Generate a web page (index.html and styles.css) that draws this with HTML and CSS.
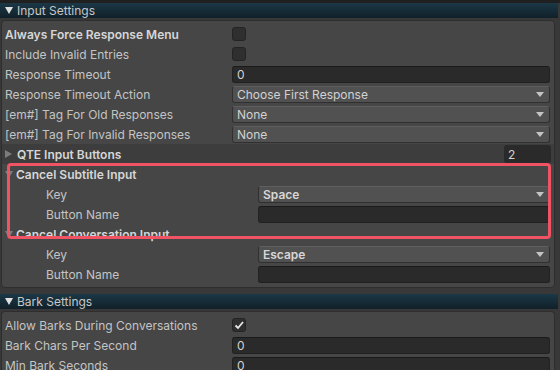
FILE: index.html
```html
<!DOCTYPE html>
<html>
<head>
<meta charset="utf-8">
<link rel="stylesheet" href="styles.css">
</head>
<body>
<div class="top-strip"></div>
<div class="section-header">
  <svg class="hdr-fold" width="8" height="7" viewBox="0 0 8 7"><path d="M0 0H8L4 7Z"/></svg>
  <span>Input Settings</span>
</div>
<div class="panel">
  <div class="row"><span class="label bold">Always Force Response Menu</span><span class="checkbox"></span></div>
  <div class="row"><span class="label">Include Invalid Entries</span><span class="checkbox"></span></div>
  <div class="row"><span class="label">Response Timeout</span><span class="field text">0</span></div>
  <div class="row"><span class="label">Response Timeout Action</span><span class="field dropdown"><span>Choose First Response</span><svg class="arrow" width="8" height="5" viewBox="0 0 8 5"><path d="M0 0H8L4 5Z"/></svg></span></div>
  <div class="row"><span class="label">[em#] Tag For Old Responses</span><span class="field dropdown"><span>None</span><svg class="arrow" width="8" height="5" viewBox="0 0 8 5"><path d="M0 0H8L4 5Z"/></svg></span></div>
  <div class="row"><span class="label">[em#] Tag For Invalid Responses</span><span class="field dropdown"><span>None</span><svg class="arrow" width="8" height="5" viewBox="0 0 8 5"><path d="M0 0H8L4 5Z"/></svg></span></div>
  <div class="list-header">
    <svg class="fold" width="7" height="8" viewBox="0 0 7 8"><path d="M0 0V8L7 4Z"/></svg>
    <span class="label bold">QTE Input Buttons</span>
    <span class="count">2</span>
  </div>
  <div class="group">
    <div class="foldout">
      <svg class="fold" width="8" height="7" viewBox="0 0 8 7"><path d="M0 0H8L4 7Z"/></svg>
      <span class="label bold">Cancel Subtitle Input</span>
    </div>
    <div class="row nested"><span class="label">Key</span><span class="field dropdown"><span class="bold">Space</span><svg class="arrow" width="8" height="5" viewBox="0 0 8 5"><path d="M0 0H8L4 5Z"/></svg></span></div>
    <div class="row nested"><span class="label">Button Name</span><span class="field text"></span></div>
    <div class="highlight"></div>
  </div>
  <div class="foldout">
    <svg class="fold" width="8" height="7" viewBox="0 0 8 7"><path d="M0 0H8L4 7Z"/></svg>
    <span class="label bold">Cancel Conversation Input</span>
  </div>
  <div class="row nested"><span class="label">Key</span><span class="field dropdown"><span class="bold">Escape</span><svg class="arrow" width="8" height="5" viewBox="0 0 8 5"><path d="M0 0H8L4 5Z"/></svg></span></div>
  <div class="row nested"><span class="label">Button Name</span><span class="field text"></span></div>
</div>
<div class="section-header second">
  <svg class="hdr-fold" width="8" height="7" viewBox="0 0 8 7"><path d="M0 0H8L4 7Z"/></svg>
  <span>Bark Settings</span>
</div>
<div class="panel open">
  <div class="row"><span class="label">Allow Barks During Conversations</span><span class="checkbox"><svg width="12" height="12" viewBox="0 0 12 12"><path d="M2.5 6.5L5 9L10 3" fill="none" stroke="#e8e8e8" stroke-width="1.8"/></svg></span></div>
  <div class="row"><span class="label">Bark Chars Per Second</span><span class="field text">0</span></div>
  <div class="row"><span class="label">Min Bark Seconds</span><span class="field text">0</span></div>
</div>
</body>
</html>
```
FILE: styles.css
```css
* { box-sizing: border-box; }
html, body { margin: 0; padding: 0; }
body {
  width: 560px;
  height: 370px;
  overflow: hidden;
  background: #383838;
  font-family: Inter, "Noto Sans", sans-serif;
  font-size: 12px;
  color: #c4c4c4;
}
.top-strip {
  height: 3px;
  background: #202020;
}
.section-header {
  height: 15px;
  width: 558px;
  display: flex;
  align-items: center;
  gap: 4px;
  padding-left: 5px;
  background: linear-gradient(#1b3846, #112029);
  color: #c8c8c8;
  font-size: 12px;
}
.section-header.second { margin-top: 6px; }
.hdr-fold { fill: #e0e0e0; }
.panel {
  margin-top: 2px;
  margin-left: 1px;
  width: 554px;
  background: #464646;
  border: 1px solid #2e2e2e;
  border-radius: 4px;
  padding: 3px 0 3px 0;
}
.panel.open {
  border-bottom: none;
  border-radius: 4px 4px 0 0;
}
.row {
  display: grid;
  grid-template-columns: 227px 318px;
  height: 20px;
  align-items: center;
  padding-left: 3px;
}
.row.nested {
  grid-template-columns: 212px 292px;
  padding-left: 44px;
}
.label { white-space: nowrap; }
.bold { font-weight: 600; color: #d6d6d6; }
.checkbox {
  width: 14px;
  height: 14px;
  background: #2f2f2f;
  border: 1px solid #242424;
  border-radius: 3px;
  display: flex;
  align-items: center;
  justify-content: center;
}
.field {
  height: 17px;
  border-radius: 3px;
  display: flex;
  align-items: center;
  padding-left: 4px;
  white-space: nowrap;
}
.field.text {
  background: #2a2a2a;
  border: 1px solid #212121;
  border-top-color: #1a1a1a;
  color: #d2d2d2;
}
.field.dropdown {
  background: #515151;
  border: 1px solid #303030;
  border-top-color: #5e5e5e;
  justify-content: space-between;
  padding-right: 5px;
  color: #d2d2d2;
}
.arrow { fill: #c4c4c4; }
.list-header {
  height: 20px;
  margin-right: 0;
  background: #3d3d3d;
  display: flex;
  align-items: center;
  padding-left: 3px;
  gap: 5px;
}
.fold { fill: #7c7c7c; flex: none; }
.count {
  margin-left: auto;
  margin-right: 3px;
  width: 47px;
  height: 18px;
  background: #2a2a2a;
  border-radius: 3px;
  padding-left: 4px;
  display: flex;
  align-items: center;
  color: #d2d2d2;
}
.foldout {
  height: 20px;
  display: flex;
  align-items: center;
  padding-left: 3px;
  gap: 3px;
}
.group { position: relative; }
.highlight {
  position: absolute;
  top: -1px;
  bottom: -15px;
  left: 5px;
  right: 3px;
  border: 3px solid #f05363;
  border-radius: 4px;
  pointer-events: none;
}
```
